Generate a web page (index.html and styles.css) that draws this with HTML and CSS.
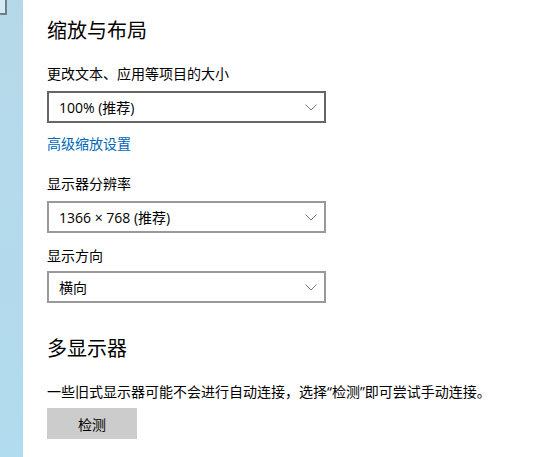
FILE: index.html
```html
<!DOCTYPE html>
<html lang="zh-CN">
<head>
    <meta charset="UTF-8">
    <meta name="viewport" content="width=device-width, initial-scale=1.0">
    <title>显示设置</title>
    <link rel="stylesheet" href="styles.css">
</head>
<body>
    <div class="rail">
        <div class="corner"></div>
    </div>
    <div class="content">
        <h2 class="title">缩放与布局</h2>
        <p class="label first">更改文本、应用等项目的大小</p>
        <div class="dropdown active">
            <span>100% (推荐)</span>
            <svg class="chevron" width="12" height="7" viewBox="0 0 12 7"><path d="M0.5 0.5 L6 6 L11.5 0.5" fill="none" stroke="#7a7a7a" stroke-width="1"/></svg>
        </div>
        <a href="#" class="link">高级缩放设置</a>

        <p class="label res">显示器分辨率</p>
        <div class="dropdown">
            <span>1366 × 768 (推荐)</span>
            <svg class="chevron" width="12" height="7" viewBox="0 0 12 7"><path d="M0.5 0.5 L6 6 L11.5 0.5" fill="none" stroke="#7a7a7a" stroke-width="1"/></svg>
        </div>

        <p class="label dir">显示方向</p>
        <div class="dropdown tight">
            <span>横向</span>
            <svg class="chevron" width="12" height="7" viewBox="0 0 12 7"><path d="M0.5 0.5 L6 6 L11.5 0.5" fill="none" stroke="#7a7a7a" stroke-width="1"/></svg>
        </div>

        <h2 class="title multi">多显示器</h2>
        <p class="note">一些旧式显示器可能不会进行自动连接，选择“检测”即可尝试手动连接。</p>
        <button class="detect">检测</button>
    </div>
</body>
</html>
```
FILE: styles.css
```css
body {
    font-family: "Open Sans", "Noto Sans CJK SC", sans-serif;
    margin: 0;
    padding: 0;
    display: flex;
    background-color: #ffffff;
    color: #000000;
    height: 100vh;
    overflow: hidden;
}

.rail {
    width: 23px;
    flex-shrink: 0;
    height: 100vh;
    background: linear-gradient(180deg, #b6d9e9 0%, #b1dbee 100%);
}

.corner {
    width: 5px;
    height: 13px;
    background-color: #d6eaf4;
    border-right: 2px solid #6d8089;
    border-bottom: 2px solid #6d8089;
}

.content {
    padding-left: 24px;
    display: flex;
    flex-direction: column;
    align-items: flex-start;
}

.title {
    font-size: 20px;
    font-weight: normal;
    line-height: 28px;
    margin: 17px 0 0;
}

.label {
    font-size: 14px;
    line-height: 20px;
    margin: 0;
}

.first {
    margin-top: 19px;
}

.res {
    margin-top: 20px;
}

.dir {
    margin-top: 13px;
}

.dropdown {
    box-sizing: border-box;
    width: 279px;
    height: 32px;
    margin-top: 7px;
    border: 2px solid #999999;
    padding: 0 7px 0 10px;
    display: flex;
    align-items: center;
    justify-content: space-between;
    font-size: 14px;
}

.dropdown.active {
    border-color: #666666;
}

.dropdown.tight {
    margin-top: 5px;
}

.chevron {
    display: block;
}

.link {
    font-size: 14px;
    line-height: 20px;
    margin-top: 11px;
    color: #0067b8;
    text-decoration: none;
}

.multi {
    margin-top: 32px;
}

.note {
    font-size: 14px;
    line-height: 16px;
    margin: 21px 0 0;
    white-space: nowrap;
}

.detect {
    width: 90px;
    height: 31px;
    margin-top: 8px;
    border: none;
    background-color: #cccccc;
    font-family: inherit;
    font-size: 14px;
    color: #000000;
    padding: 0;
}
```
